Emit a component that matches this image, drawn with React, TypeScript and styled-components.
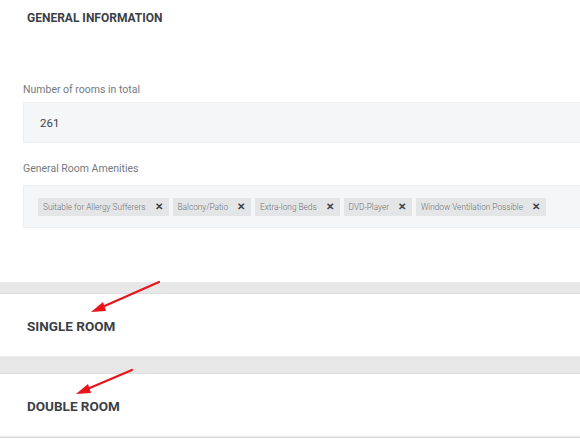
import React from "react";
import styled, { createGlobalStyle } from "styled-components";

const Global = createGlobalStyle`
  html, body {
    margin: 0;
    padding: 0;
    background: #ffffff;
    overflow: hidden;
  }
  body {
    font-family: Roboto, "Liberation Sans", Arial, sans-serif;
    color: #3b3f46;
  }
`;

const Page = styled.div`
  position: relative;
  width: 580px;
  height: 439px;
  overflow: hidden;
  background: #fff;
`;

const Section = styled.section`
  display: flex;
  flex-direction: column;
  background: #fff;
`;

const SectionTitle = styled.h2<{ $pad: string; $size: number }>`
  margin: 0;
  padding: ${(p) => p.$pad};
  font-family: Roboto, "Liberation Sans", Arial, sans-serif;
  font-size: ${(p) => p.$size}px;
  font-weight: 700;
  color: #3b3f46;
  line-height: 16px;
  text-transform: uppercase;
`;

const Fields = styled.div`
  display: flex;
  flex-direction: column;
  padding: 57px 0 54px 23px;
`;

const Field = styled.div`
  display: flex;
  flex-direction: column;
  margin-bottom: 19px;
  &:last-child {
    margin-bottom: 0;
  }
`;

const Label = styled.label`
  font-size: 10.5px;
  color: #757a80;
  line-height: 14px;
  margin-bottom: 5px;
`;

const InputBox = styled.div`
  width: 600px;
  height: 41px;
  box-sizing: border-box;
  display: flex;
  align-items: center;
  padding-left: 16px;
  background: #f5f6f7;
  border: 1px solid #eceef0;
  font-size: 11.5px;
  color: #3b3f46;
`;

const TagBox = styled(InputBox)`
  height: 43px;
  margin-top: 4px;
  padding-left: 14px;
  gap: 4px;
`;

const Tag = styled.span`
  display: inline-flex;
  align-items: center;
  height: 18px;
  padding: 0 6px 0 5px;
  background: #e4e5e6;
  font-size: 8.25px;
  font-weight: 300;
  color: #6e7379;
  white-space: nowrap;
`;

const TagRemove = styled.span`
  margin-left: 9px;
  font-size: 9.5px;
  font-weight: 700;
  color: #3b3f46;
  line-height: 1;
`;

const Divider = styled.div<{ $h: number }>`
  height: ${(p) => p.$h}px;
  box-sizing: border-box;
  background: #e7e7e7;
  border-top: 1px solid #ececec;
  border-bottom: 1px solid #dcdcdc;
`;

const RoomRow = styled.div`
  height: 62px;
  display: flex;
  align-items: center;
  background: #fff;
`;

const Arrow = styled.svg`
  position: absolute;
  left: 0;
  top: 0;
  pointer-events: none;
`;

const amenities = [
  "Suitable for Allergy Sufferers",
  "Balcony/Patio",
  "Extra-long Beds",
  "DVD-Player",
  "Window Ventilation Possible",
];

export default function App() {
  return (
    <>
      <Global />
      <Page>
        <Section>
          <SectionTitle $pad="10px 27px 0" $size={12}>
            General Information
          </SectionTitle>
          <Fields>
            <Field>
              <Label>Number of rooms in total</Label>
              <InputBox>261</InputBox>
            </Field>
            <Field>
              <Label>General Room Amenities</Label>
              <TagBox>
                {amenities.map((a) => (
                  <Tag key={a}>
                    {a}
                    <TagRemove>✕</TagRemove>
                  </Tag>
                ))}
              </TagBox>
            </Field>
          </Fields>
        </Section>
        <Divider $h={12} />
        <RoomRow>
          <SectionTitle $pad="2px 27px 0" $size={13.5}>
            Single Room
          </SectionTitle>
        </RoomRow>
        <Divider $h={18} />
        <RoomRow>
          <SectionTitle $pad="2px 27px 0" $size={13.5}>
            Double Room
          </SectionTitle>
        </RoomRow>
        <Divider $h={2} />
        <Arrow width="580" height="439" viewBox="0 0 580 439">
          <g stroke="#e8141b" strokeWidth="2.2" strokeLinecap="round" fill="#e8141b">
            <line x1="159" y1="282" x2="100" y2="308" />
            <polygon points="91,312 103,302 106,311" stroke="none" />
            <line x1="132" y1="370" x2="85" y2="390" />
            <polygon points="76,394 88,384 91,393" stroke="none" />
          </g>
        </Arrow>
      </Page>
    </>
  );
}
